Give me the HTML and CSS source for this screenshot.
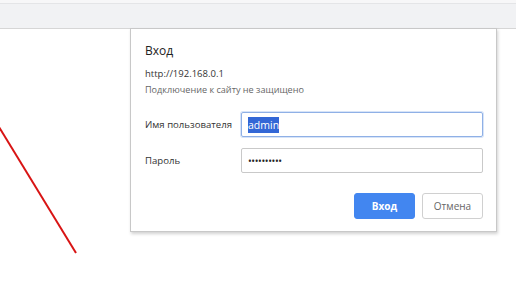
FILE: index.html
```html
<!DOCTYPE html>
<html lang="ru">
<head>
  <meta charset="UTF-8">
  <title>Вход</title>
  <link rel="stylesheet" href="styles.css">
</head>
<body>
  <div class="toolbar-top"></div>
  <div class="toolbar"></div>

  <div class="page">
    <svg class="arrow" width="90" height="240" viewBox="0 0 90 240">
      <line x1="-1" y1="98" x2="76" y2="224" stroke="#d81414" stroke-width="2"/>
    </svg>

    <div class="dialog">
      <div class="title">Вход</div>
      <div class="origin">http://192.168.0.1</div>
      <div class="note">Подключение к сайту не защищено</div>

      <div class="form">
        <label class="label">Имя пользователя</label>
        <div class="field focused"><span class="selected">admin</span></div>
        <label class="label">Пароль</label>
        <div class="field"><span class="dots">••••••••••</span></div>
      </div>

      <div class="actions">
        <button class="btn primary">Вход</button>
        <button class="btn">Отмена</button>
      </div>
    </div>
  </div>
</body>
</html>
```

FILE: styles.css
```css
body {
  margin: 0;
  font-family: "Open Sans", "Noto Sans", sans-serif;
  background-color: white;
  color: #333;
}
.toolbar-top {
  height: 3px;
  background-color: #f7f7f8;
  border-bottom: 1px solid #e4e5e7;
}
.toolbar {
  height: 24px;
  background-color: #f1f2f4;
  border-bottom: 1px solid #d6d6d6;
}
.page {
  position: relative;
  height: 261px;
}
.arrow {
  position: absolute;
  left: 0;
  top: 0;
}
.dialog {
  position: absolute;
  left: 130px;
  top: -1px;
  width: 338px;
  padding: 14px 13px 12px 14px;
  background-color: white;
  border: 1px solid #c8c8c8;
  box-shadow: 1px 2px 3px rgba(0,0,0,0.18);
}
.title {
  font-size: 12px;
  line-height: 16px;
  color: #222;
}
.origin {
  margin-top: 8px;
  font-size: 9.5px;
  line-height: 14px;
  color: #333;
}
.note {
  margin-top: 2px;
  font-size: 9.1px;
  line-height: 14px;
  color: #666;
}
.form {
  display: grid;
  grid-template-columns: 96px 1fr;
  row-gap: 11px;
  align-items: center;
  margin-top: 15px;
}
.label {
  font-size: 9.6px;
  color: #333;
}
.field {
  height: 23px;
  border: 1px solid #c9c9c9;
  border-radius: 2px;
  display: flex;
  align-items: center;
  padding-left: 6px;
  font-size: 10.5px;
}
.field.focused {
  border-color: #8fb0e6;
  box-shadow: 0 0 0 1px #d7e4f8;
}
.selected {
  background-color: #3367d6;
  color: white;
  line-height: 16px;
}
.dots {
  font-size: 10px;
  letter-spacing: -0.4px;
  color: #222;
}
.actions {
  display: flex;
  justify-content: flex-end;
  gap: 7px;
  margin-top: 20px;
}
.btn {
  width: 61px;
  height: 26px;
  border: 1px solid #d0d0d0;
  border-radius: 3px;
  background-color: white;
  color: #666;
  font-family: "Open Sans", "Noto Sans", sans-serif;
  font-size: 10px;
  padding: 0;
}
.btn.primary {
  background-color: #4286f0;
  border-color: #4286f0;
  color: white;
  font-weight: bold;
}
```
